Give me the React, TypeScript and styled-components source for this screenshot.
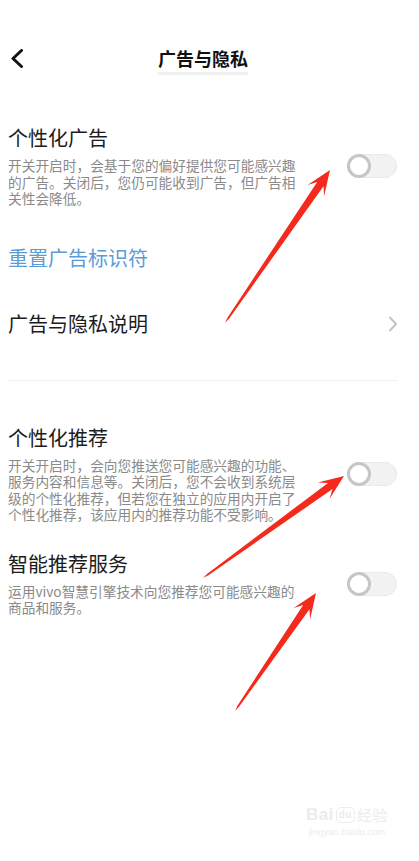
import React from "react";
import styled, { createGlobalStyle } from "styled-components";

const GlobalStyle = createGlobalStyle`
  html, body { margin: 0; padding: 0; background: #ffffff; }
  body { font-family: "Noto Sans CJK SC", "Noto Sans", sans-serif; }
`;

const Page = styled.div`
  position: relative;
  width: 419px;
  min-height: 861px;
  box-sizing: border-box;
  padding: 40px 21px 0 8px;
  overflow: hidden;
  background: #fff;
`;

const Header = styled.header`
  position: relative;
  height: 36px;
  display: flex;
  align-items: center;
  justify-content: center;
`;

const BackButton = styled.span`
  position: absolute;
  left: 2px;
  top: 9px;
  display: flex;
`;

const HeaderTitle = styled.h1`
  margin: 0;
  font-size: 18px;
  font-weight: 700;
  line-height: 24px;
  color: #111;
  padding-bottom: 2px;
  border-bottom: 3px solid #f0f0f0;
  margin-top: 4px;
`;

const ToggleItem = styled.section<{ $top: number }>`
  display: flex;
  align-items: center;
  justify-content: space-between;
  margin-top: ${(p) => p.$top}px;
`;

const TextCol = styled.div`
  width: 292px;
  display: flex;
  flex-direction: column;
`;

const ItemTitle = styled.div`
  font-size: 20px;
  line-height: 24px;
  color: #1c1c1c;
`;

const ItemDesc = styled.div`
  margin-top: 7px;
  font-size: 13.7px;
  line-height: 16.5px;
  color: #8a8a8a;
`;

const Track = styled.span`
  width: 50px;
  height: 24px;
  box-sizing: border-box;
  border-radius: 12px;
  background: #f2f2f2;
  border: 1px solid #e9e9e9;
  display: flex;
  align-items: center;
  margin-right: 1px;
`;

const Knob = styled.span`
  width: 24px;
  height: 24px;
  margin-left: -1px;
  box-sizing: border-box;
  border-radius: 50%;
  border: 3px solid #c6c6c6;
  background: #fff;
`;

const LinkRow = styled.div`
  margin-top: 39px;
  font-size: 20px;
  line-height: 24px;
  color: #5b9bd8;
`;

const NavRow = styled.div`
  margin-top: 42px;
  display: flex;
  align-items: center;
  justify-content: space-between;
  font-size: 20px;
  line-height: 24px;
  color: #1c1c1c;
`;

const Divider = styled.hr`
  margin: 44px 0 0 0;
  border: none;
  height: 1px;
  background: #f0f0f0;
`;

const Overlay = styled.svg`
  position: absolute;
  left: 0;
  top: 0;
  pointer-events: none;
`;

const Watermark = styled.div`
  position: absolute;
  left: 302px;
  top: 806px;
  width: 90px;
  display: flex;
  flex-direction: column;
  align-items: center;
  color: #ececec;
  font-family: "Liberation Sans", Arial, sans-serif;
`;

const WmTop = styled.div`
  display: flex;
  align-items: flex-end;
  font-size: 17px;
  line-height: 18px;
  font-weight: 700;
  letter-spacing: 0.5px;
`;

const WmDu = styled.span`
  font-size: 10px;
  line-height: 12px;
  border: 1px solid #ececec;
  border-radius: 5px;
  padding: 1px 2px;
  margin: 0 2px 1px 2px;
`;

const WmCn = styled.span`
  font-family: "Noto Sans CJK SC", sans-serif;
  font-size: 15px;
  font-weight: 400;
`;

const WmUrl = styled.div`
  font-size: 9.5px;
  line-height: 11px;
  margin-top: 2px;
`;

const Toggle = () => (
  <Track>
    <Knob />
  </Track>
);

type Pt = [number, number];

function arrowPoints(tail: Pt, tip: Pt): string {
  const dx = tip[0] - tail[0];
  const dy = tip[1] - tail[1];
  const L = Math.hypot(dx, dy);
  const ux = dx / L;
  const uy = dy / L;
  const nx = -uy;
  const ny = ux;
  const at = (back: number, side: number): string =>
    `${(tip[0] - ux * back + nx * side).toFixed(1)},${(tip[1] - uy * back + ny * side).toFixed(1)}`;
  const tailBack = L - 2;
  return [
    `${tail[0]},${tail[1]}`,
    at(tailBack - 4, 1),
    at(17, 3.8),
    at(25, 10),
    at(0, 0),
    at(25, -10),
    at(17, -3.8),
    at(tailBack - 4, -1),
  ].join(" ");
}

const arrows: [Pt, Pt][] = [
  [[225, 323], [330, 170]],
  [[203, 578], [344, 476]],
  [[235, 711], [316, 593]],
];

export default function App() {
  return (
    <>
      <GlobalStyle />
      <Page>
        <Header>
          <BackButton>
            <svg width="14" height="19" viewBox="0 0 14 19">
              <polyline
                points="11.5,1.5 3,9.5 11.5,17.5"
                fill="none"
                stroke="#111"
                strokeWidth="3"
                strokeLinecap="round"
                strokeLinejoin="round"
              />
            </svg>
          </BackButton>
          <HeaderTitle>广告与隐私</HeaderTitle>
        </Header>

        <ToggleItem $top={50}>
          <TextCol>
            <ItemTitle>个性化广告</ItemTitle>
            <ItemDesc>
              开关开启时，会基于您的偏好提供您可能感兴趣的广告。关闭后，您仍可能收到广告，但广告相关性会降低。
            </ItemDesc>
          </TextCol>
          <Toggle />
        </ToggleItem>

        <LinkRow>重置广告标识符</LinkRow>

        <NavRow>
          <span>广告与隐私说明</span>
          <svg width="10" height="16" viewBox="0 0 10 16">
            <polyline
              points="2,1.5 8,8 2,14.5"
              fill="none"
              stroke="#c4c4c4"
              strokeWidth="2"
              strokeLinecap="round"
              strokeLinejoin="round"
            />
          </svg>
        </NavRow>

        <Divider />

        <ToggleItem $top={45}>
          <TextCol>
            <ItemTitle>个性化推荐</ItemTitle>
            <ItemDesc>
              开关开启时，会向您推送您可能感兴趣的功能、服务内容和信息等。关闭后，您不会收到系统层级的个性化推荐，但若您在独立的应用内开启了个性化推荐，该应用内的推荐功能不受影响。
            </ItemDesc>
          </TextCol>
          <Toggle />
        </ToggleItem>

        <ToggleItem $top={29}>
          <TextCol>
            <ItemTitle>智能推荐服务</ItemTitle>
            <ItemDesc>运用vivo智慧引擎技术向您推荐您可能感兴趣的商品和服务。</ItemDesc>
          </TextCol>
          <Toggle />
        </ToggleItem>

        <Overlay width="419" height="861" viewBox="0 0 419 861">
          {arrows.map(([tail, tip], i) => (
            <polygon key={i} points={arrowPoints(tail, tip)} fill="#f42a1c" />
          ))}
        </Overlay>

        <Watermark>
          <WmTop>
            Bai<WmDu>du</WmDu>
            <WmCn>经验</WmCn>
          </WmTop>
          <WmUrl>jingyan.baidu.com</WmUrl>
        </Watermark>
      </Page>
    </>
  );
}
